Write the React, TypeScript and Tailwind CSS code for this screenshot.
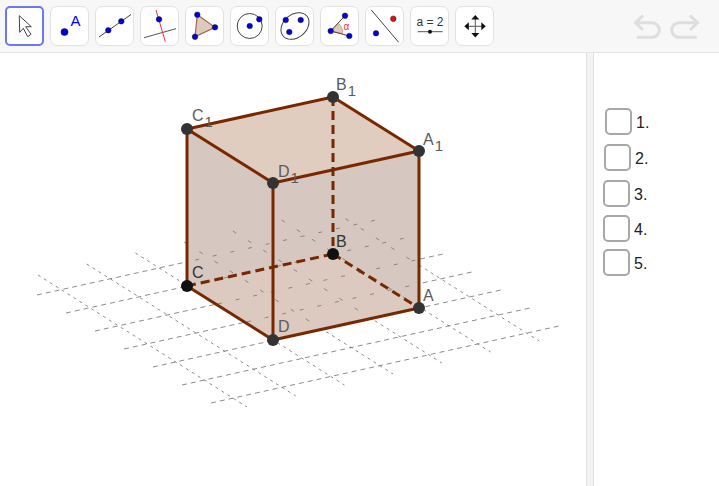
import React from "react";

const blue = "#0000d8";

function Tool({ x, active, children }: { x: number; active?: boolean; children: React.ReactNode }) {
  return (
    <div
      className={
        active
          ? "w-[39px] h-[40px] shrink-0 rounded-[5px] border-2 border-[#6b78f0] bg-white box-border overflow-hidden"
          : "w-[39px] h-[40px] shrink-0 rounded-[7px] border border-[#e2e2e2] bg-white box-border overflow-hidden"
      }
    >
      <svg width="39" height="40" viewBox={`${x + (active ? 2 : 1)} ${active ? 8 : 7} 39 40`} className="block">
        {children}
      </svg>
    </div>
  );
}

const Dot = ({ cx, cy, r = 2.8, fill = blue }: { cx: number; cy: number; r?: number; fill?: string }) => (
  <circle cx={cx} cy={cy} r={r} fill={fill} stroke="#222" strokeWidth={0.5} />
);

function Toolbar() {
  return (
    <div className="h-[53px] bg-[#f7f7f7] border-b border-[#e4e4e4] box-border flex items-start pt-[6px] pl-[5px] gap-[6px] shrink-0">
      <Tool x={5} active>
        <path d="M19.3 15.7 L31.3 26.7 L25.7 26.7 L31 34.3 L27.7 36.7 L23.3 28.3 L19.7 32.3 Z" fill="#fff" stroke="#444" strokeWidth={1} strokeLinejoin="round" />
      </Tool>
      <Tool x={50}>
        <circle cx={64.5} cy={32} r={3.6} fill={blue} stroke="#222" strokeWidth={0.5} />
        <text x={70.5} y={25.5} fontSize={15} fill="#0000ff" fontFamily="Liberation Sans, sans-serif">A</text>
      </Tool>
      <Tool x={95}>
        <line x1={99} y1={37} x2={131} y2={14.5} stroke="#444" strokeWidth={1} />
        <Dot cx={108.3} cy={30.3} />
        <Dot cx={121.3} cy={21.3} />
      </Tool>
      <Tool x={140}>
        <line x1={144} y1={37.7} x2={176} y2={28.7} stroke="#555" strokeWidth={1} />
        <line x1={156} y1={10} x2={165.3} y2={41.7} stroke="#f03040" strokeWidth={1} />
        <Dot cx={159} cy={19.3} />
      </Tool>
      <Tool x={185}>
        <polygon points="197.3,14.7 215,27.3 195,36.7" fill="#dccabf" stroke="#a5654c" strokeWidth={1.2} />
        <Dot cx={197.3} cy={14.7} />
        <Dot cx={215} cy={27.3} />
        <Dot cx={195} cy={36.7} />
      </Tool>
      <Tool x={230}>
        <circle cx={249.7} cy={26} r={12.5} fill="none" stroke="#444" strokeWidth={1} />
        <Dot cx={249.7} cy={26} />
        <Dot cx={259.3} cy={19.3} />
      </Tool>
      <Tool x={275}>
        <ellipse cx={295} cy={26} rx={15.5} ry={11.5} transform="rotate(-40 295 26)" fill="none" stroke="#444" strokeWidth={1} />
        <Dot cx={285.7} cy={20} />
        <Dot cx={300.7} cy={20} />
        <Dot cx={289.3} cy={32} />
      </Tool>
      <Tool x={320}>
        <path d="M330.7 31 L338.4 23.3 A12 12 0 0 1 342.4 33.6 Z" fill="#dccabf" stroke="#f08070" strokeWidth={0.8} />
        <line x1={330.7} y1={31} x2={345} y2={15.7} stroke="#444" strokeWidth={1} />
        <line x1={330.7} y1={31} x2={349.3} y2={36} stroke="#444" strokeWidth={1} />
        <Dot cx={345} cy={15.7} />
        <Dot cx={330.7} cy={31} />
        <Dot cx={349.3} cy={36} />
        <text x={343.5} y={29.5} fontSize={10} fill="#f03040" fontFamily="Liberation Sans, sans-serif">α</text>
      </Tool>
      <Tool x={365}>
        <line x1={371.3} y1={10} x2={398.7} y2={42.3} stroke="#444" strokeWidth={1} />
        <Dot cx={393.3} cy={18.7} fill="#e01010" />
        <Dot cx={376} cy={33.3} />
      </Tool>
      <Tool x={410}>
        <text x={430} y={25.5} textAnchor="middle" fontSize={12} fill="#333" fontFamily="Liberation Sans, sans-serif">a = 2</text>
        <line x1={417.7} y1={31.7} x2={442.7} y2={31.7} stroke="#555" strokeWidth={1} />
        <circle cx={430} cy={31.7} r={2} fill="#111" />
      </Tool>
      <Tool x={455}>
        <line x1={475.3} y1={18} x2={475.3} y2={35} stroke="#555" strokeWidth={1} />
        <line x1={467} y1={26.3} x2={484} y2={26.3} stroke="#555" strokeWidth={1} />
        <g fill="#111">
          <polygon points="475.3,15 471.3,19.5 479.3,19.5" />
          <polygon points="475.3,37.6 471.3,33 479.3,33" />
          <polygon points="464.3,26.3 468.8,22.3 468.8,30.3" />
          <polygon points="485.8,26.3 481.3,22.3 481.3,30.3" />
        </g>
      </Tool>
      <svg width="90" height="46" viewBox="625 6 90 46" className="ml-[125px] shrink-0 block">
        <g fill="none" stroke="#dedede" strokeWidth={3}>
          <path d="M638 22.7 H652 A7.3 7.3 0 0 1 652 37.3 H636.7" />
          <path d="M643 15.5 L635.5 22.7 L643 30" />
          <path d="M695 22.7 H679 A7.3 7.3 0 0 0 679 37.3 H696.7" />
          <path d="M690 15.5 L697.5 22.7 L690 30" />
        </g>
      </svg>
    </div>
  );
}

const P = {
  C1: [187, 129], B1: [333, 97], A1: [419, 151], D1: [273, 183],
  C: [187, 286], B: [333, 254], A: [419, 308], D: [273, 340],
} as const;
type K = keyof typeof P;
const pts = (...k: K[]) => k.map((n) => P[n].join(",")).join(" ");

const rising = [0, 1, 2, 3, 4, 5, 6].map((i) => [37 + 29 * i, 295 + 18 * i, 385 + 29 * i, 218 + 18 * i]);
const falling = [0, 1, 2, 3, 4, 5, 6].map((i) => [38 + 48.7 * i, 275 - 11 * i, 247 + 48.7 * i, 407 - 11 * i]);

function Label({ x, y, t, sub, fill = "#5c5c5c" }: { x: number; y: number; t: string; sub?: boolean; fill?: string }) {
  return (
    <text x={x} y={y} fontSize={16} fill={fill} fontFamily="Liberation Sans, sans-serif">
      {t}
      {sub && <tspan fontSize={15} dy={6} dx={1}>1</tspan>}
    </text>
  );
}

function Grid({ a, b, color, width }: { a: string; b: string; color: string; width: number }) {
  return (
    <g stroke={color} strokeWidth={width} fill="none">
      {rising.map((l, i) => <line key={i} x1={l[0]} y1={l[1]} x2={l[2]} y2={l[3]} strokeDasharray={a} />)}
      {falling.map((l, i) => <line key={i} x1={l[0]} y1={l[1]} x2={l[2]} y2={l[3]} strokeDasharray={b} />)}
    </g>
  );
}

function Scene() {
  const edge = "#782800";
  const line = (a: K, b: K, dash?: boolean) => (
    <line
      key={a + b}
      x1={P[a][0]} y1={P[a][1]} x2={P[b][0]} y2={P[b][1]}
      stroke={edge}
      strokeWidth={3}
      strokeDasharray={dash ? "9 5" : undefined}
    />
  );
  return (
    <svg width="586" height="433" viewBox="0 53 586 433" className="block shrink-0">
      <defs>
        <clipPath id="cube-shape">
          <polygon points={pts("C1", "B1", "A1", "A", "D", "C")} />
        </clipPath>
      </defs>
      <Grid a="5 4" b="3 4" color="#6e6e6e" width={0.8} />
      <polygon points={pts("C1", "B1", "A1", "A", "D", "C")} fill="#d6c7c0" />
      <polygon points={pts("C", "D", "A", "B")} fill="#dcc9c0" />
      <polygon points={pts("C1", "D1", "A1", "B1")} fill="#e0cdc0" />
      <g clipPath="url(#cube-shape)">
        <Grid a="4 14" b="4 14" color="#7c7470" width={0.8} />
        <polygon points={pts("C1", "D1", "A1", "B1")} fill="#e0cdc0" />
      </g>
      {line("C", "B", true)}
      {line("B", "A", true)}
      {line("B1", "B", true)}
      {line("C1", "C")}
      {line("D1", "D")}
      {line("A1", "A")}
      {line("C1", "B1")}
      {line("B1", "A1")}
      {line("A1", "D1")}
      {line("D1", "C1")}
      {line("C", "D")}
      {line("D", "A")}
      {(["C1", "B1", "A1", "D1", "D", "A"] as K[]).map((k) => (
        <circle key={k} cx={P[k][0]} cy={P[k][1]} r={6} fill="#333333" />
      ))}
      {(["C", "B"] as K[]).map((k) => (
        <circle key={k} cx={P[k][0]} cy={P[k][1]} r={6} fill="#111111" />
      ))}
      <Label x={192} y={121} t="C" sub />
      <Label x={336} y={90} t="B" sub />
      <Label x={423} y={145} t="A" sub />
      <Label x={278} y={177} t="D" sub />
      <Label x={192} y={278} t="C" fill="#333" />
      <Label x={336} y={247} t="B" fill="#333" />
      <Label x={423} y={301} t="A" />
      <Label x={278} y={332} t="D" />
    </svg>
  );
}

function Check({ label, className }: { label: string; className: string }) {
  return (
    <div className={"flex items-center " + className}>
      <div className="w-[27px] h-[27px] rounded-[5px] border-2 border-[#a8a8a8] bg-white box-border shrink-0" />
      <span className="ml-[4px] pt-[2px] text-[16px] text-[#222] font-['Liberation_Sans',sans-serif]">{label}</span>
    </div>
  );
}

export default function App() {
  return (
    <div className="w-[719px] h-[486px] bg-white overflow-hidden flex flex-col">
      <Toolbar />
      <div className="flex flex-1 min-h-0">
        <Scene />
        <div className="w-[8px] shrink-0 bg-[#f3f3f3] border-l border-r border-[#e2e2e2] box-border" />
        <div className="flex-1 flex flex-col pt-[55px]">
          <Check label="1." className="ml-[11px]" />
          <Check label="2." className="ml-[10px] mt-[9px]" />
          <Check label="3." className="ml-[9px] mt-[9px]" />
          <Check label="4." className="ml-[9px] mt-[8px]" />
          <Check label="5." className="ml-[9px] mt-[7px]" />
        </div>
      </div>
    </div>
  );
}
